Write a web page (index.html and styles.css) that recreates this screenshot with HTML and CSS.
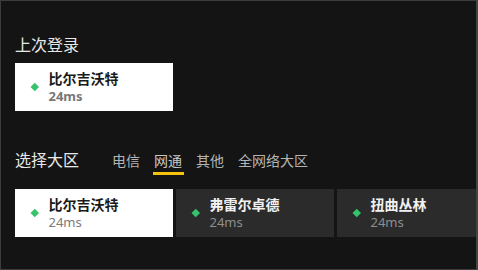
FILE: index.html
```html
<!DOCTYPE html>
<html lang="zh">
<head>
<meta charset="utf-8">
<link rel="stylesheet" href="styles.css">
</head>
<body>
<div class="frame">
  <div class="section-title last-title">上次登录</div>
  <div class="row">
    <div class="card light">
      <span class="dot"></span>
      <div class="info">
        <div class="name">比尔吉沃特</div>
        <div class="ping bold">24ms</div>
      </div>
    </div>
  </div>

  <div class="header">
    <div class="section-title">选择大区</div>
    <div class="tabs">
      <span class="tab">电信</span>
      <span class="tab active">网通</span>
      <span class="tab">其他</span>
      <span class="tab">全网络大区</span>
    </div>
  </div>
  <div class="row servers">
    <div class="card light">
      <span class="dot"></span>
      <div class="info">
        <div class="name">比尔吉沃特</div>
        <div class="ping">24ms</div>
      </div>
    </div>
    <div class="card dark">
      <span class="dot"></span>
      <div class="info">
        <div class="name">弗雷尔卓德</div>
        <div class="ping">24ms</div>
      </div>
    </div>
    <div class="card dark">
      <span class="dot"></span>
      <div class="info">
        <div class="name">扭曲丛林</div>
        <div class="ping">24ms</div>
      </div>
    </div>
  </div>
</div>
</body>
</html>
```

FILE: styles.css
```css
html, body {
  margin: 0;
  padding: 0;
  background: #141414;
}
.frame {
  width: 478px;
  height: 270px;
  box-sizing: border-box;
  background: #141414;
  border: 1px solid #3c3c3c;
  border-right: 2px solid #444;
  padding: 34px 0 0 14px;
  overflow: hidden;
  font-family: "Noto Sans", "Noto Sans CJK SC", sans-serif;
}
.section-title {
  font-size: 16px;
  line-height: 21px;
  color: #e8e8e8;
  width: 64px;
  flex: none;
}
.row {
  display: flex;
  gap: 3px;
  margin-top: 7px;
}
.card {
  flex: none;
  width: 158px;
  height: 48px;
  box-sizing: border-box;
  display: flex;
  align-items: center;
  padding-left: 17px;
}
.card.light { background: #ffffff; }
.card.dark { background: #2b2b2b; }
.dot {
  width: 5.5px;
  height: 5.5px;
  background: #35c46b;
  transform: rotate(45deg);
  flex: none;
  margin-right: 11px;
}
.info {
  display: flex;
  flex-direction: column;
  margin-top: 1px;
}
.name {
  font-size: 14px;
  line-height: 18px;
  font-weight: 700;
  color: #1a1a1a;
  white-space: nowrap;
}
.dark .name { color: #f2f2f2; }
.ping {
  font-size: 13px;
  line-height: 17px;
  color: #7a7a7a;
  white-space: nowrap;
}
.ping.bold { font-weight: 700; color: #777; }
.dark .ping { color: #8e8e8e; }
.header {
  display: flex;
  align-items: center;
  margin-top: 39px;
  height: 20px;
}
.tabs {
  display: flex;
  gap: 14px;
  margin-left: 33px;
  margin-top: 2px;
}
.tab {
  position: relative;
  font-size: 14px;
  line-height: 20px;
  color: #b4b4b4;
}
.tab.active { color: #c8c8c8; }
.tab.active::after {
  content: "";
  position: absolute;
  left: -1px;
  right: -2px;
  top: 21px;
  height: 3px;
  background: #f4c20d;
}
.servers {
  margin-top: 19px;
}
```
